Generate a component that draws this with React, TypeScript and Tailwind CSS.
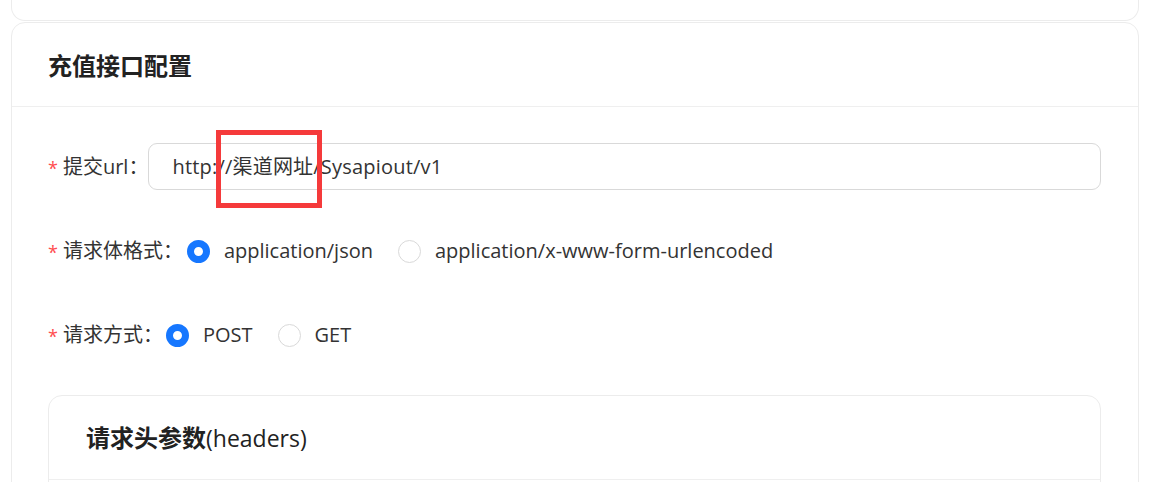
import React from 'react';

const font = { fontFamily: '"Segoe UI", "Open Sans", "Noto Sans CJK SC", sans-serif' };
const cjkBold = { fontFamily: '"Noto Sans CJK SC", sans-serif' };

const Radio: React.FC<{ checked?: boolean; label: string }> = ({ checked, label }) => (
    <label className="flex items-center gap-[14px] mr-[25px]">
        {checked ? (
            <span className="w-[23px] h-[23px] rounded-full border-[7.5px] border-[#1677ff] bg-white box-border" />
        ) : (
            <span className="w-[23px] h-[23px] rounded-full border border-[#d9d9d9] bg-white box-border" />
        )}
        <span className="text-[20px] text-[#333]">{label}</span>
    </label>
);

const FormLabel: React.FC<{ text: string }> = ({ text }) => (
    <div className="flex items-center shrink-0">
        <span className="text-[#ff4d4f] text-[18px] mr-[5px] mt-[3px]">*</span>
        <span className="text-[20px] text-[#333]">{text}</span>
    </div>
);

export default function App() {
    return (
        <div className="bg-white w-[1155px] h-[482px] overflow-hidden" style={font}>
            <div className="pl-[11px] pr-[16px]">
                {/* previous card tail */}
                <div className="h-[21px] border border-[#ececec] border-t-0 rounded-b-[14px]" />

                {/* main card */}
                <div className="mt-[1px] border border-[#ececec] rounded-t-[14px] h-[600px]">
                    <div className="h-[84px] flex items-center pl-[36px] border-b border-[#efefef]">
                        <h2 className="text-[24px] font-bold text-[#222]" style={cjkBold}>充值接口配置</h2>
                    </div>

                    <div className="pl-[36px] pr-[37px] pt-[36px]">
                        <div className="flex items-center h-[47px]">
                            <FormLabel text="提交url：" />
                            <div className="relative flex-1 h-[47px] border border-[#d9d9d9] rounded-[9px] flex items-center pl-[23px]">
                                <span className="text-[20px] text-[#333] tracking-[0.2px]">http://渠道网址/Sysapiout/v1</span>
                                <div className="absolute left-[67px] top-[-14px] w-[106px] h-[78px] border-[5px] border-[#f53a3b]" />
                            </div>
                        </div>

                        <div className="flex items-center mt-[37px] h-[48px]">
                            <FormLabel text="请求体格式：" />
                            <div className="flex items-center ml-[4px]">
                                <Radio checked label="application/json" />
                                <Radio label="application/x-www-form-urlencoded" />
                            </div>
                        </div>

                        <div className="flex items-center mt-[36px] h-[48px]">
                            <FormLabel text="请求方式：" />
                            <div className="flex items-center ml-[3px]">
                                <Radio checked label="POST" />
                                <Radio label="GET" />
                            </div>
                        </div>

                        <div className="mt-[36px] border border-[#ececec] rounded-t-[14px] h-[200px]">
                            <div className="h-[84px] flex items-center pl-[37px] border-b border-[#efefef]">
                                <h3 className="text-[24px] font-bold text-[#222]" style={cjkBold}>
                                    请求头参数<span className="font-normal text-[23px]" style={font}>(headers)</span>
                                </h3>
                            </div>
                        </div>
                    </div>
                </div>
            </div>
        </div>
    );
}
